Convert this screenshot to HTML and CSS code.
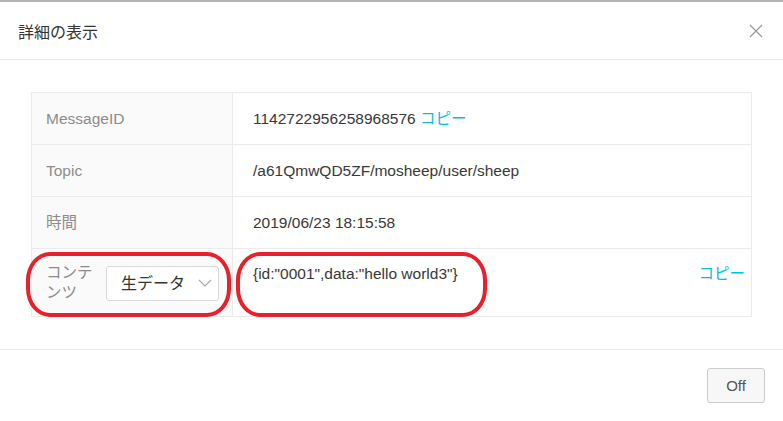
FILE: index.html
```html
<!DOCTYPE html>
<html lang="ja">
<head>
    <meta charset="UTF-8">
    <meta name="viewport" content="width=device-width, initial-scale=1.0">
    <title>詳細の表示</title>
    <link rel="stylesheet" href="styles.css">
</head>
<body>
<div class="modal">
    <!-- Header -->
    <div class="modal-header">
        <span class="modal-title">詳細の表示</span>
        <svg class="close" width="14" height="14" viewBox="0 0 14 14">
            <path d="M1 1 L13 13 M13 1 L1 13" stroke="#999" stroke-width="1.2" fill="none"/>
        </svg>
    </div>

    <!-- Body -->
    <div class="modal-body">
        <table class="detail">
            <colgroup>
                <col class="col-label">
                <col>
            </colgroup>
            <tr>
                <td class="label">MessageID</td>
                <td class="value">1142722956258968576 <a class="copy">コピー</a></td>
            </tr>
            <tr>
                <td class="label">Topic</td>
                <td class="value">/a61QmwQD5ZF/mosheep/user/sheep</td>
            </tr>
            <tr>
                <td class="label">時間</td>
                <td class="value">2019/06/23 18:15:58</td>
            </tr>
            <tr class="content-row">
                <td class="label">
                    <div class="content-label">
                        <span class="label-text">コンテンツ</span>
                        <div class="select">
                            <span>生データ</span>
                            <svg width="14" height="8" viewBox="0 0 14 8">
                                <path d="M1 1 L7 7 L13 1" stroke="#aaa" stroke-width="1.2" fill="none"/>
                            </svg>
                        </div>
                    </div>
                    <div class="mark mark-left"></div>
                </td>
                <td class="value">
                    <a class="copy copy-right">コピー</a>
                    {id:"0001",data:"hello world3"}
                    <div class="mark mark-right"></div>
                </td>
            </tr>
        </table>
    </div>

    <!-- Footer -->
    <div class="modal-footer">
        <button class="btn">Off</button>
    </div>
</div>
</body>
</html>
```

FILE: styles.css
```css
/* General Reset */
body {
    margin: 0;
    font-family: 'Liberation Sans', Arial, 'Noto Sans CJK JP', sans-serif;
    background: #fff;
    color: #333;
}

.modal {
    border-top: 2px solid #b4b4b4;
    background: #fff;
}

/* Header */
.modal-header {
    height: 57px;
    display: flex;
    align-items: center;
    justify-content: space-between;
    padding: 0 20px 0 18px;
    border-bottom: 1px solid #e8e8e8;
}

.modal-title {
    font-size: 16px;
    color: #333;
}

.close {
    margin-top: 1px;
}

/* Body */
.modal-body {
    padding: 32px 31px 32px;
}

.detail {
    width: 100%;
    table-layout: fixed;
    border-collapse: collapse;
    font-size: 15.5px;
}

.col-label {
    width: 201px;
}

.detail td {
    border: 1px solid #ebebeb;
    line-height: 19px;
    padding: 16px 20px;
}

.detail td.label {
    padding-left: 14px;
    background: #fafafa;
    color: #8c8c8c;
    position: relative;
}

.detail td.value {
    color: #383838;
    position: relative;
}

.copy {
    color: #00c1de;
    cursor: pointer;
}

/* Content row */
.content-row td.label {
    padding: 14px 12px 13px 14px;
}

.content-row td.value {
    vertical-align: top;
    padding-top: 15px;
    padding-right: 6px;
}

.copy-right {
    float: right;
}

.content-label {
    display: flex;
    align-items: center;
    gap: 13px;
}

.label-text {
    width: 47px;
    line-height: 20px;
    word-break: break-all;
}

.select {
    width: 113px;
    height: 35px;
    border: 1px solid #d9d9d9;
    border-radius: 3px;
    background: #fff;
    display: flex;
    align-items: center;
    justify-content: space-between;
    padding: 0 6px 0 14px;
    box-sizing: border-box;
    color: #333;
    font-size: 16px;
}

/* Red annotation marks */
.mark {
    position: absolute;
    border: 4px solid #e8202a;
    border-radius: 24px / 28px;
    box-sizing: border-box;
}

.mark-left {
    left: -6px;
    top: 3px;
    width: 205px;
    height: 65px;
}

.mark-right {
    left: 3px;
    top: 3px;
    width: 251px;
    height: 65px;
}

/* Footer */
.modal-footer {
    border-top: 1px solid #e8e8e8;
    padding: 18px 18px;
    display: flex;
    justify-content: flex-end;
}

.btn {
    width: 58px;
    height: 35px;
    background: #f7f7f7;
    border: 1px solid #ccc;
    border-radius: 3px;
    font-family: 'Liberation Sans', Arial, sans-serif;
    font-size: 15px;
    color: #555;
    cursor: pointer;
}
```
